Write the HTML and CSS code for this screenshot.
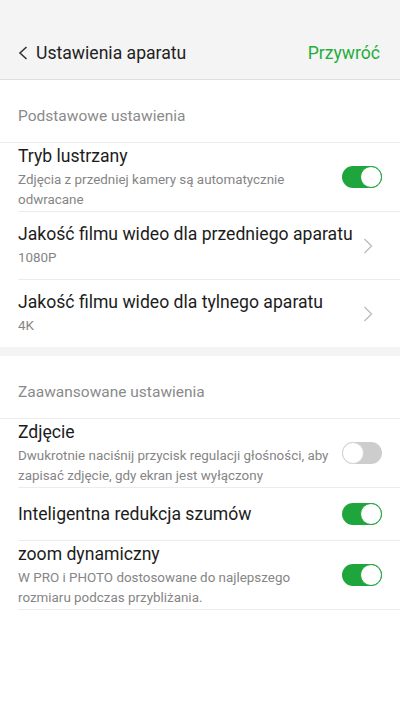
FILE: index.html
```html
<!DOCTYPE html>
<html lang="pl">
<head>
  <meta charset="UTF-8">
  <meta name="viewport" content="width=device-width, initial-scale=1.0">
  <title>Ustawienia aparatu</title>
  <link rel="stylesheet" href="styles.css">
</head>
<body>
  <header class="topbar">
    <div class="topbar-left">
      <svg class="back" width="10" height="14" viewBox="0 0 10 14"><path d="M8.5 1 L2 7 L8.5 13" fill="none" stroke="#333" stroke-width="1.6"/></svg>
      <h1>Ustawienia aparatu</h1>
    </div>
    <a class="reset" href="#">Przywróć</a>
  </header>

  <section class="group">
    <div class="group-title">Podstawowe ustawienia</div>
    <div class="row tall">
      <div class="row-text">
        <div class="row-title">Tryb lustrzany</div>
        <div class="row-sub">Zdjęcia z przedniej kamery są automatycznie odwracane</div>
      </div>
      <span class="switch on"></span>
    </div>
    <div class="row mid link">
      <div class="row-text">
        <div class="row-title">Jakość filmu wideo dla przedniego aparatu</div>
        <div class="row-sub">1080P</div>
      </div>
      <svg class="chev" width="10" height="16" viewBox="0 0 10 16"><path d="M1.5 1 L8.5 8 L1.5 15" fill="none" stroke="#bdbdbd" stroke-width="1.4"/></svg>
    </div>
    <div class="row mid link last">
      <div class="row-text">
        <div class="row-title">Jakość filmu wideo dla tylnego aparatu</div>
        <div class="row-sub">4K</div>
      </div>
      <svg class="chev" width="10" height="16" viewBox="0 0 10 16"><path d="M1.5 1 L8.5 8 L1.5 15" fill="none" stroke="#bdbdbd" stroke-width="1.4"/></svg>
    </div>
  </section>

  <div class="spacer"></div>

  <section class="group">
    <div class="group-title">Zaawansowane ustawienia</div>
    <div class="row tall">
      <div class="row-text">
        <div class="row-title">Zdjęcie</div>
        <div class="row-sub">Dwukrotnie naciśnij przycisk regulacji głośności, aby zapisać zdjęcie, gdy ekran jest wyłączony</div>
      </div>
      <span class="switch"></span>
    </div>
    <div class="row">
      <div class="row-text">
        <div class="row-title">Inteligentna redukcja szumów</div>
      </div>
      <span class="switch on"></span>
    </div>
    <div class="row tall">
      <div class="row-text">
        <div class="row-title">zoom dynamiczny</div>
        <div class="row-sub">W PRO i PHOTO dostosowane do najlepszego rozmiaru podczas przybliżania.</div>
      </div>
      <span class="switch on"></span>
    </div>
  </section>
</body>
</html>
```

FILE: styles.css
```css
body {
  margin: 0;
  font-family: Roboto, "Noto Sans", sans-serif;
  background: #fff;
  color: #1c1c1c;
}
.topbar {
  height: 80px;
  background: #f4f4f4;
  border-bottom: 1px solid #dedede;
  display: flex;
  align-items: flex-end;
  justify-content: space-between;
  padding: 0 20px 13px 18px;
  box-sizing: border-box;
}
.topbar-left {
  display: flex;
  align-items: center;
  gap: 8px;
}
.topbar h1 {
  margin: 0;
  font-size: 17.6px;
  font-weight: 400;
  line-height: 26px;
  color: #222;
}
.reset {
  font-size: 17.6px;
  line-height: 26px;
  color: #1fae3b;
  text-decoration: none;
}
.group-title {
  height: 63px;
  box-sizing: border-box;
  padding: 26px 18px 0;
  font-size: 15.5px;
  line-height: 20px;
  color: #8a8a8a;
  border-bottom: 1px solid #ececec;
}
.row {
  min-height: 52px;
  margin-left: 18px;
  padding-right: 18px;
  border-bottom: 1px solid #ececec;
  display: flex;
  align-items: center;
  gap: 12px;
}
.row.mid {
  min-height: 67px;
}
.row.tall {
  min-height: 68px;
}
.row.link {
  gap: 2px;
}
.row.last {
  border-bottom: none;
}
.row-text {
  flex: 1;
  min-width: 0;
  display: flex;
  flex-direction: column;
  gap: 3px;
}
.row-title {
  font-size: 17.6px;
  line-height: 22px;
  color: #1c1c1c;
  white-space: nowrap;
}
.row-sub {
  font-size: 13.4px;
  line-height: 20px;
  color: #858585;
}
.chev {
  margin-right: 9px;
  flex: none;
}
.spacer {
  height: 9px;
  background: #f4f4f4;
}
.switch {
  flex: none;
  position: relative;
  width: 40px;
  height: 22px;
  border-radius: 11px;
  background: #cdcdcd;
  box-sizing: border-box;
}
.switch::after {
  content: "";
  position: absolute;
  top: 0;
  left: 0;
  width: 22px;
  height: 22px;
  border-radius: 50%;
  background: #fff;
  border: 1px solid #d6d6d6;
  box-sizing: border-box;
}
.switch.on {
  background: #1ea53b;
}
.switch.on::after {
  left: 18px;
  border-color: #1ea53b;
}
```
